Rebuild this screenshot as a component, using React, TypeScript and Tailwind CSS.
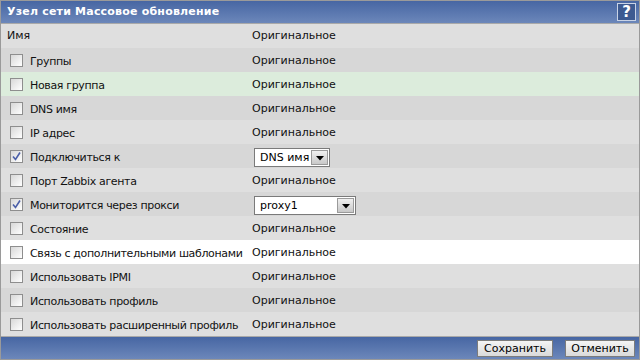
import React from 'react';

type Row = {
  label: string;
  checked?: boolean;
  select?: { value: string; width: string };
  bg: string;
};

const rows: Row[] = [
  { label: 'Группы', bg: 'bg-[#d7d7d7]' },
  { label: 'Новая группа', bg: 'bg-[#dcecdc]' },
  { label: 'DNS имя', bg: 'bg-[#d7d7d7]' },
  { label: 'IP адрес', bg: 'bg-[#dfdfdf]' },
  {
    label: 'Подключиться к',
    checked: true,
    select: { value: 'DNS имя', width: 'w-[76px]' },
    bg: 'bg-[#d7d7d7]',
  },
  { label: 'Порт Zabbix агента', bg: 'bg-[#dfdfdf]' },
  {
    label: 'Мониторится через прокси',
    checked: true,
    select: { value: 'proxy1', width: 'w-[102px]' },
    bg: 'bg-[#d7d7d7]',
  },
  { label: 'Состояние', bg: 'bg-[#dfdfdf]' },
  { label: 'Связь с дополнительными шаблонами', bg: 'bg-white' },
  { label: 'Использовать IPMI', bg: 'bg-[#dfdfdf]' },
  { label: 'Использовать профиль', bg: 'bg-[#d7d7d7]' },
  { label: 'Использовать расширенный профиль', bg: 'bg-[#dfdfdf]' },
];

function Checkbox({ checked }: { checked?: boolean }) {
  return (
    <span className="w-[13px] h-[13px] border border-[#8e8e8e] bg-gradient-to-br from-[#d8d8d8] to-white flex items-center justify-center shrink-0">
      {checked && (
        <svg width="11" height="11" viewBox="0 0 11 11">
          <path d="M2 5.5 L4.5 8.5 L9 1.5" fill="none" stroke="#4b5fa8" strokeWidth="1.6" />
        </svg>
      )}
    </span>
  );
}

function Select({ value, width }: { value: string; width: string }) {
  return (
    <div className={`${width} h-[19px] border border-[#7a7a7a] bg-white flex items-stretch`}>
      <span className="flex-1 pl-[5px] pt-[1px] text-[11px] leading-[16px] text-black">{value}</span>
      <span className="w-[17px] m-[1px] border border-[#9a9a9a] bg-gradient-to-b from-[#f0f0f0] to-[#c8c8c8] flex items-center justify-center">
        <svg width="8" height="5" viewBox="0 0 8 5" className="mt-[3px]">
          <path d="M0 0 H8 L4 4.5 Z" fill="#000" />
        </svg>
      </span>
    </div>
  );
}

function Button({ children, width }: { children: React.ReactNode; width: string }) {
  return (
    <button
      type="button"
      className={`${width} h-[17px] border border-[#7c7c7c] bg-gradient-to-b from-[#f4f4f4] to-[#dadada] text-[11px] leading-[15px] text-black`}
    >
      {children}
    </button>
  );
}

export default function App() {
  return (
    <div className="w-[640px] h-[360px] border border-[#9a9a9a] flex flex-col font-['DejaVu_Sans',Verdana,sans-serif] text-[11px] text-[#111]">
      <div className="h-[23px] shrink-0 bg-gradient-to-b from-[#4766a3] to-[#6c87ba] border-b border-[#a9a9a9] flex items-center justify-between pl-[6px] pr-[3px]">
        <span className="text-white font-bold text-[11px] tracking-[0.2px]">Узел сети Массовое обновление</span>
        <span className="w-[19px] h-[18px] border border-[#c9d3e6] bg-[#3d5a91] text-white font-bold text-[15px] leading-[16px] flex items-center justify-center">
          ?
        </span>
      </div>
      <div className="h-[24px] shrink-0 bg-[#dfdfdf] flex items-center">
        <span className="w-[251px] pl-[6px]">Имя</span>
        <span>Оригинальное</span>
      </div>
      {rows.map((r) => (
        <div key={r.label} className={`h-[24px] shrink-0 ${r.bg} flex items-center`}>
          <div className="w-[251px] flex items-center pl-[9px] gap-[7px]">
            <Checkbox checked={r.checked} />
            <span className="pt-[4px] whitespace-nowrap tracking-[-0.35px]">{r.label}</span>
          </div>
          {r.select ? (
            <div className="pl-[2px] pt-[2px]">
              <Select value={r.select.value} width={r.select.width} />
            </div>
          ) : (
            <span className="pt-[2px]">Оригинальное</span>
          )}
        </div>
      ))}
      <div className="flex-1 bg-gradient-to-b from-[#4766a3] to-[#6c87ba] border-t border-[#a9a9a9] flex items-center justify-end gap-[12px] pr-[4px]">
        <Button width="w-[76px]">Сохранить</Button>
        <Button width="w-[70px]">Отменить</Button>
      </div>
    </div>
  );
}
